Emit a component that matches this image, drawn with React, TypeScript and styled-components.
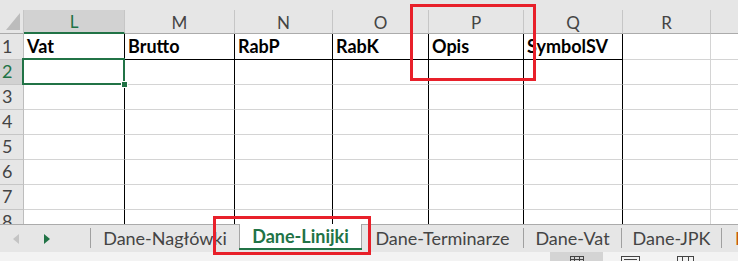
import React from 'react';
import styled, { createGlobalStyle } from 'styled-components';

const Global = createGlobalStyle`
  html, body { margin: 0; padding: 0; background: #ffffff; }
  body { width: 738px; height: 261px; overflow: hidden; }
`;

const GREEN = '#217346';
const RED = '#e8202a';

type Col = { letter: string; width: number; title: string; black: boolean };

const COLS: Col[] = [
  { letter: 'L', width: 101, title: 'Vat', black: true },
  { letter: 'M', width: 110, title: 'Brutto', black: true },
  { letter: 'N', width: 98, title: 'RabP', black: true },
  { letter: 'O', width: 96, title: 'RabK', black: true },
  { letter: 'P', width: 95, title: 'Opis', black: true },
  { letter: 'Q', width: 99, title: 'SymbolSV', black: true },
  { letter: 'R', width: 88, title: '', black: false },
  { letter: '', width: 88, title: '', black: false },
];

const ROWS = [1, 2, 3, 4, 5, 6, 7, 8];

const Root = styled.div`
  position: relative;
  width: 738px;
  height: 261px;
  overflow: hidden;
  background: #ffffff;
`;

const Sheet = styled.div`
  position: relative;
  height: 224px;
  overflow: hidden;
  display: flex;
  flex-direction: column;
`;

const TopStrip = styled.div`
  height: 10px;
  flex: none;
  background: #e6e6e6;
`;

const Grid = styled.div`
  display: grid;
  grid-template-columns: 24px ${COLS.map((c) => `${c.width}px`).join(' ')};
  grid-template-rows: 24px 26px repeat(7, 25px);
  width: max-content;
`;

const Corner = styled.div`
  background: #e6e6e6;
  border-right: 1px solid #c6c6c6;
  border-bottom: 1px solid #ababab;
  display: flex;
  align-items: flex-start;
  justify-content: flex-end;
  padding: 3px 3px 0 0;
`;

const ColHead = styled.div<{ $selected: boolean }>`
  background: ${(p) => (p.$selected ? '#d2d2d2' : '#e6e6e6')};
  border-right: 1px solid #c6c6c6;
  border-bottom: ${(p) => (p.$selected ? `2px solid ${GREEN}` : '1px solid #ababab')};
  color: ${(p) => (p.$selected ? GREEN : '#444444')};
  font-family: Lato, 'Liberation Sans', sans-serif;
  font-size: 17px;
  display: flex;
  align-items: center;
  justify-content: center;
  padding-top: 1px;
`;

const RowHead = styled.div<{ $selected: boolean }>`
  background: ${(p) => (p.$selected ? '#d2d2d2' : '#e6e6e6')};
  border-right: 1px solid #bdbdbd;
  border-bottom: 1px solid #c6c6c6;
  color: ${(p) => (p.$selected ? GREEN : '#444444')};
  font-family: Lato, 'Liberation Sans', sans-serif;
  font-size: 18px;
  line-height: 18px;
  display: flex;
  align-items: flex-end;
  padding: 0 0 4px 2px;
`;

const Cell = styled.div<{ $blackRight: boolean; $blackBottom: boolean }>`
  background: #ffffff;
  border-right: 1px solid ${(p) => (p.$blackRight ? '#000000' : '#d4d4d4')};
  border-bottom: 1px solid ${(p) => (p.$blackBottom ? '#000000' : '#d4d4d4')};
  font-family: Lato, 'Liberation Sans', sans-serif;
  font-weight: 700;
  font-size: 18px;
  line-height: 18px;
  color: #000000;
  display: flex;
  align-items: flex-end;
  padding: 0 0 4px 3px;
  white-space: nowrap;
  overflow: visible;
`;

const Selection = styled.div`
  position: absolute;
  left: 22px;
  top: 58px;
  width: 103px;
  height: 27px;
  box-sizing: border-box;
  border: 2px solid ${GREEN};
  pointer-events: none;
`;

const Handle = styled.div`
  position: absolute;
  right: -5px;
  bottom: -5px;
  width: 5px;
  height: 5px;
  background: ${GREEN};
  border: 1px solid #ffffff;
`;

const Highlight = styled.div<{ $l: number; $t: number; $w: number; $h: number }>`
  position: absolute;
  left: ${(p) => p.$l}px;
  top: ${(p) => p.$t}px;
  width: ${(p) => p.$w}px;
  height: ${(p) => p.$h}px;
  box-sizing: border-box;
  border: 3px solid ${RED};
  pointer-events: none;
  z-index: 5;
`;

const TabBar = styled.div`
  height: 28px;
  box-sizing: border-box;
  border-top: 1px solid #ababab;
  background: #e6e6e6;
  display: flex;
  align-items: stretch;
  font-family: Lato, 'Liberation Sans', sans-serif;
  font-size: 18px;
  white-space: nowrap;
`;

const Nav = styled.div`
  width: 90px;
  flex: none;
  display: flex;
  align-items: center;
  padding-top: 1px;
  box-sizing: border-box;
`;

const NavBtn = styled.div<{ $x: number }>`
  width: 8px;
  height: 10px;
  margin-left: ${(p) => p.$x}px;
  display: flex;
`;

const Sep = styled.div`
  width: 1px;
  flex: none;
  background: #a0a0a0;
  margin: 3px 0 4px;
`;

const Tab = styled.div<{ $w: number }>`
  width: ${(p) => p.$w}px;
  flex: none;
  display: flex;
  align-items: center;
  justify-content: center;
  color: #444444;
  padding-bottom: 2px;
  box-sizing: border-box;
`;

const ActiveTab = styled.div<{ $w: number }>`
  width: ${(p) => p.$w}px;
  flex: none;
  margin-top: -1px;
  height: 25px;
  background: #ffffff;
  border-left: 1px solid #a6a6a6;
  border-right: 1px solid #a6a6a6;
  box-sizing: border-box;
  position: relative;
  display: flex;
  align-items: center;
  justify-content: center;
  color: ${GREEN};
  font-weight: 700;
  padding-bottom: 1px;
  &::after {
    content: '';
    position: absolute;
    left: -1px;
    right: -1px;
    bottom: -1px;
    height: 2px;
    background: ${GREEN};
  }
`;

const TabFill = styled.div`
  flex: 1;
  display: flex;
  align-items: center;
  padding: 0 0 2px 13px;
  color: #c65911;
`;

const StatusBar = styled.div`
  height: 9px;
  background: #f3f3f3;
  display: flex;
  align-items: flex-start;
  overflow: hidden;
  padding-left: 550px;
`;

const ViewBtn = styled.div<{ $w: number; $on?: boolean }>`
  width: ${(p) => p.$w}px;
  height: 20px;
  flex: none;
  background: ${(p) => (p.$on ? '#d4d4d4' : 'transparent')};
  display: flex;
  justify-content: center;
  padding-top: 4px;
  box-sizing: border-box;
`;

const tabs = {
  before: { label: 'Dane-Nagłówki', w: 148 },
  active: { label: 'Dane-Linijki', w: 123 },
  after: [
    { label: 'Dane-Terminarze', w: 161 },
    { label: 'Dane-Vat', w: 97 },
    { label: 'Dane-JPK', w: 99 },
  ],
};

export default function App() {
  return (
    <Root>
      <Global />
      <Sheet>
        <TopStrip />
        <Grid>
          <Corner>
            <svg width="14" height="17" viewBox="0 0 14 17">
              <polygon points="14,0 14,17 0,17" fill="#bcbcbc" />
            </svg>
          </Corner>
          {COLS.map((c, i) => (
            <ColHead key={i} $selected={c.letter === 'L'}>
              {c.letter}
            </ColHead>
          ))}
          {ROWS.map((r) => (
            <React.Fragment key={r}>
              <RowHead $selected={r === 2}>{r}</RowHead>
              {COLS.map((c, i) => (
                <Cell key={i} $blackRight={c.black} $blackBottom={r === 1 && c.black}>
                  {r === 1 ? c.title : ''}
                </Cell>
              ))}
            </React.Fragment>
          ))}
        </Grid>
        <Selection>
          <Handle />
        </Selection>
      </Sheet>
      <TabBar>
        <Nav>
          <NavBtn $x={13}>
            <svg width="6" height="10" viewBox="0 0 6 10">
              <polygon points="6,0 6,10 0,5" fill="#c4c4c4" />
            </svg>
          </NavBtn>
          <NavBtn $x={23}>
            <svg width="6" height="10" viewBox="0 0 6 10">
              <polygon points="0,0 0,10 6,5" fill={GREEN} />
            </svg>
          </NavBtn>
        </Nav>
        <Sep />
        <Tab $w={tabs.before.w}>{tabs.before.label}</Tab>
        <ActiveTab $w={tabs.active.w}>{tabs.active.label}</ActiveTab>
        {tabs.after.map((t) => (
          <React.Fragment key={t.label}>
            <Tab $w={t.w}>{t.label}</Tab>
            <Sep />
          </React.Fragment>
        ))}
        <TabFill>Dane-Kontrahenci</TabFill>
      </TabBar>
      <StatusBar>
        <ViewBtn $w={53} $on>
          <svg width="14" height="12" viewBox="0 0 14 12">
            <rect x="0.5" y="0.5" width="13" height="11" fill="none" stroke="#444" />
            <line x1="0" y1="3.5" x2="14" y2="3.5" stroke="#444" />
            <line x1="4.5" y1="0" x2="4.5" y2="12" stroke="#444" />
            <line x1="9.5" y1="0" x2="9.5" y2="12" stroke="#444" />
          </svg>
        </ViewBtn>
        <ViewBtn $w={55}>
          <svg width="19" height="12" viewBox="0 0 19 12">
            <rect x="0.5" y="0.5" width="18" height="11" fill="none" stroke="#444" />
            <line x1="3" y1="3.5" x2="16" y2="3.5" stroke="#444" />
          </svg>
        </ViewBtn>
        <ViewBtn $w={55}>
          <svg width="17" height="12" viewBox="0 0 17 12">
            <rect x="0.5" y="0.5" width="16" height="11" fill="none" stroke="#444" />
            <line x1="5.5" y1="0" x2="5.5" y2="12" stroke="#444" />
            <line x1="11.5" y1="0" x2="11.5" y2="12" stroke="#444" />
          </svg>
        </ViewBtn>
      </StatusBar>
      <Highlight $l={410} $t={4} $w={126} $h={77} />
      <Highlight $l={213} $t={216} $w={158} $h={39} />
    </Root>
  );
}
